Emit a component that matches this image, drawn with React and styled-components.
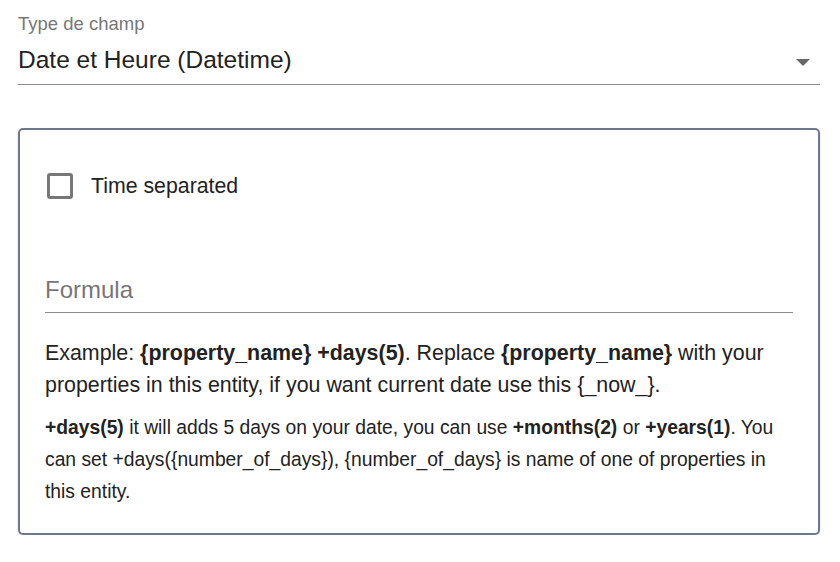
import React, { useState } from 'react'
import styled, { createGlobalStyle } from 'styled-components'

const Global = createGlobalStyle`
  body {
    margin: 0;
    background: #fff;
    font-family: "Liberation Sans", Arial, sans-serif;
    color: #222;
  }
`

const Page = styled.div`
  padding: 12px 20px 0 18px;
  width: 802px;
`

const SelectField = styled.div`
  display: flex;
  flex-direction: column;
  border-bottom: 1px solid #8c8c8c;
`

const FieldLabel = styled.label`
  font-size: 18.5px;
  color: #777;
  line-height: 24px;
`

const SelectRow = styled.div`
  display: flex;
  align-items: center;
  justify-content: space-between;
  height: 48px;
  font-size: 24.5px;
  color: #222;
`

const Arrow = styled.span`
  width: 0;
  height: 0;
  border-left: 7px solid transparent;
  border-right: 7px solid transparent;
  border-top: 7px solid #666;
  margin-right: 10px;
  margin-top: 4px;
`

const Card = styled.div`
  margin-top: 43px;
  border: 2px solid #6d7890;
  border-radius: 5px;
  box-shadow: 0 1px 2px rgba(0, 0, 0, 0.2);
  padding: 43px 25px 25px 25px;
`

const CheckRow = styled.label`
  display: flex;
  align-items: center;
  gap: 18px;
  font-size: 21.3px;
  line-height: 26px;
  cursor: pointer;
`

const Box = styled.span`
  width: 26px;
  height: 26px;
  border: 3px solid #777;
  border-radius: 3px;
  margin-left: 2px;
  box-sizing: border-box;
  display: flex;
  align-items: center;
  justify-content: center;
  background: ${p => (p.checked ? '#777' : 'transparent')};
  color: #fff;
  font-size: 16px;
`

const FormulaInput = styled.input`
  display: block;
  width: 100%;
  margin-top: 77px;
  box-sizing: border-box;
  border: none;
  border-bottom: 1px solid #8c8c8c;
  padding: 0 0 8px 0;
  height: 37px;
  font-family: inherit;
  font-size: 24px;
  line-height: 28px;
  color: #222;
  outline: none;
  &::placeholder {
    color: #777;
  }
`

const Help = styled.p`
  margin: 24px 0 0 0;
  font-size: 21.4px;
  line-height: 32px;
  color: #222;
`

const SmallHelp = styled.p`
  margin: 11px 0 0 0;
  font-size: 19.3px;
  line-height: 32px;
  color: #222;
`

export default function App() {
  const [checked, setChecked] = useState(false)
  return (
    <Page>
      <Global />
      <SelectField>
        <FieldLabel>Type de champ</FieldLabel>
        <SelectRow>
          <span>Date et Heure (Datetime)</span>
          <Arrow />
        </SelectRow>
      </SelectField>
      <Card>
        <CheckRow onClick={() => setChecked(!checked)}>
          <Box checked={checked}>{checked ? '✓' : ''}</Box>
          Time separated
        </CheckRow>
        <FormulaInput placeholder="Formula" />
        <Help>
          Example: <b>{'{property_name}'} +days(5)</b>. Replace <b>{'{property_name}'}</b> with your
          properties in this entity, if you want current date use this {'{_now_}'}.
        </Help>
        <SmallHelp>
          <b>+days(5)</b> it will adds 5 days on your date, you can use <b>+months(2)</b> or{' '}
          <b>+years(1)</b>. You can set +days({'{number_of_days}'}), {'{number_of_days}'} is name
          of one of properties in this entity.
        </SmallHelp>
      </Card>
    </Page>
  )
}
